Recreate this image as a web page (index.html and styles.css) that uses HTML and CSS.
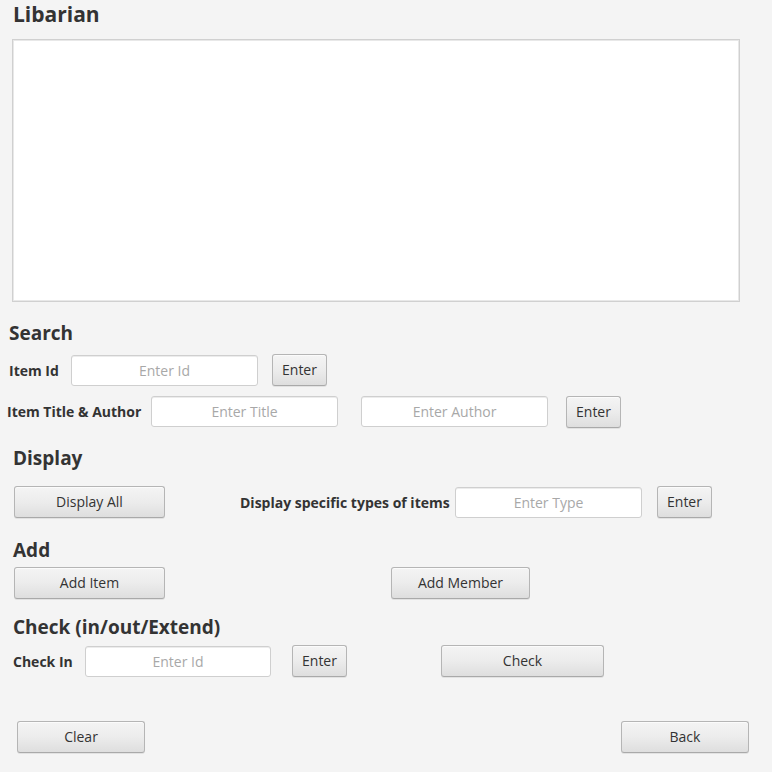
FILE: index.html
```html
<!DOCTYPE html>
<html lang="en">
<head>
<meta charset="utf-8">
<title>Libarian</title>
<link rel="stylesheet" href="styles.css">
</head>
<body>
<div class="page">
  <div class="title">Libarian</div>
  <div class="output"></div>

  <div class="heading h-search">Search</div>
  <div class="row row-id">
    <span class="label lbl-id">Item Id</span>
    <div class="field w187">Enter Id</div>
    <button class="btn btn-enter gap14">Enter</button>
  </div>
  <div class="row row-title">
    <span class="label lbl-title">Item Title &amp; Author</span>
    <div class="field w187">Enter Title</div>
    <div class="field w187 gap23">Enter Author</div>
    <button class="btn btn-enter gap18">Enter</button>
  </div>

  <div class="heading h-display">Display</div>
  <div class="row row-display">
    <button class="btn btn-wide">Display All</button>
    <span class="label lbl-type">Display specific types of items</span>
    <div class="field w187">Enter Type</div>
    <button class="btn btn-enter gap15">Enter</button>
  </div>

  <div class="heading h-add">Add</div>
  <div class="row row-add">
    <button class="btn btn-wide">Add Item</button>
    <button class="btn btn-member">Add Member</button>
  </div>

  <div class="heading h-check">Check (in/out/Extend)</div>
  <div class="row row-check">
    <span class="label lbl-check">Check In</span>
    <div class="field w186">Enter Id</div>
    <button class="btn btn-enter gap21">Enter</button>
    <button class="btn btn-check">Check</button>
  </div>

  <div class="row row-bottom">
    <button class="btn btn-bottom">Clear</button>
    <button class="btn btn-bottom">Back</button>
  </div>
</div>
</body>
</html>
```
FILE: styles.css
```css
html, body {
  margin: 0;
  padding: 0;
}
body {
  background: #f4f4f4;
  font-family: "Open Sans", "Noto Sans", sans-serif;
  color: #333333;
  width: 772px;
  height: 772px;
  overflow: hidden;
}
.page {
  display: flex;
  flex-direction: column;
}
.title {
  height: 39px;
  line-height: 28px;
  padding-left: 13px;
  font-size: 21px;
  font-weight: 700;
  color: #333;
}
.output {
  margin-left: 12px;
  width: 728px;
  height: 263px;
  box-sizing: border-box;
  background: #ffffff;
  border: 1px solid #d0d0d0;
  box-shadow: inset 0 0 0 1px #e8e8e8;
}
.heading {
  height: 26px;
  line-height: 26px;
  font-size: 19px;
  font-weight: 700;
  color: #333;
  white-space: nowrap;
}
.h-search { margin-top: 18px; padding-left: 9px; }
.h-display { margin-top: 18px; padding-left: 13px; }
.h-add { margin-top: 19px; padding-left: 13px; }
.h-check { margin-top: 15px; padding-left: 13px; }

.row {
  display: flex;
  align-items: center;
  height: 32px;
}
.row-id { margin-top: 8px; padding-left: 9px; }
.row-title { margin-top: 10px; padding-left: 7px; height: 31px; }
.row-display { margin-top: 15px; padding-left: 14px; }
.row-add { margin-top: 4px; padding-left: 14px; }
.row-check { margin-top: 5px; padding-left: 13px; }
.row-bottom {
  margin-top: 44px;
  padding: 0 23px 0 17px;
  justify-content: space-between;
}

.label {
  font-size: 14px;
  font-weight: 700;
  color: #333;
  white-space: nowrap;
  flex: none;
}
.lbl-id { width: 62px; }
.lbl-title { width: 144px; }
.lbl-type { width: 215px; margin-left: 75px; }
.lbl-check { width: 72px; }

.field {
  flex: none;
  height: 31px;
  box-sizing: border-box;
  background: #ffffff;
  border: 1px solid #cfcfcf;
  border-radius: 3px;
  box-shadow: inset 0 1px 0 #ececec;
  font-size: 14px;
  line-height: 29px;
  color: #a8a8a8;
  text-align: center;
}
.w187 { width: 187px; }
.w186 { width: 186px; }

.btn {
  flex: none;
  height: 32px;
  box-sizing: border-box;
  margin: 0;
  padding: 0;
  border: 1px solid #b5b5b5;
  border-bottom-color: #a9a9a9;
  border-radius: 3px;
  background: linear-gradient(to bottom, #f4f4f4 0%, #ececec 50%, #dedede 100%);
  box-shadow: inset 0 1px 0 #fbfbfb, 0 1px 0 #e2e2e2;
  font-family: "Open Sans", "Noto Sans", sans-serif;
  font-size: 14px;
  color: #333;
  text-align: center;
  line-height: 30px;
}
.btn-enter { width: 55px; }
.btn-wide { width: 151px; }
.btn-member { width: 139px; margin-left: 226px; }
.btn-check { width: 163px; margin-left: 94px; }
.btn-bottom { width: 128px; }

.gap14 { margin-left: 14px; }
.gap15 { margin-left: 15px; }
.gap18 { margin-left: 18px; }
.gap21 { margin-left: 21px; }
.gap23 { margin-left: 23px; }
```
